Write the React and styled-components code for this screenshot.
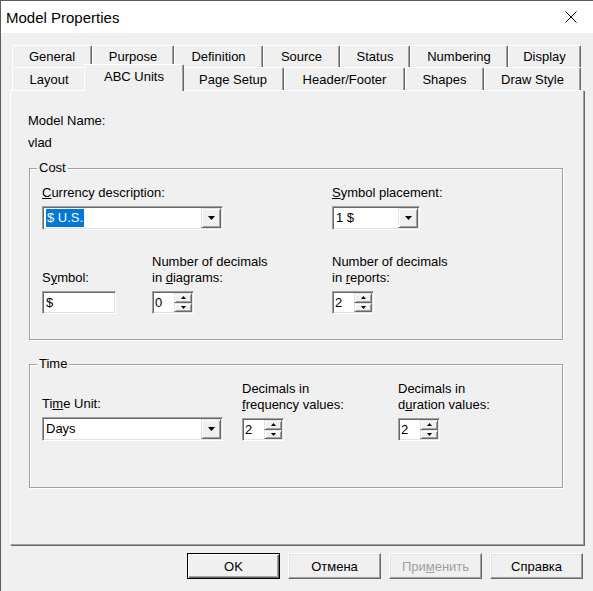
import React from "react";
import styled, { createGlobalStyle } from "styled-components";

const GlobalStyle = createGlobalStyle`
  html, body {
    margin: 0;
    padding: 0;
    background: #f0f0f0;
  }
  body {
    font-family: "Liberation Sans", Arial, sans-serif;
    font-size: 13px;
    color: #000;
  }
`;

const Window = styled.div`
  width: 593px;
  height: 591px;
  box-sizing: border-box;
  display: flex;
  flex-direction: column;
  background: #f0f0f0;
  border-top: 1px solid #5c5c5c;
  border-left: 1px solid #5c5c5c;
  overflow: hidden;
`;

const TitleBar = styled.div`
  flex: none;
  height: 32px;
  display: flex;
  align-items: center;
  justify-content: space-between;
  padding: 0 16px 0 5px;
  background: #fff;
  font-size: 15px;
`;

const Body = styled.div`
  flex: 1;
  display: flex;
  flex-direction: column;
  padding: 12px 9px 12px 9px;
`;

const TabRow = styled.div`
  display: flex;
  height: ${(p) => p.$h}px;
  padding-left: 2px;
`;

const Tab = styled.div`
  box-sizing: border-box;
  flex: none;
  width: ${(p) => p.$w + (p.$active ? 4 : 0)}px;
  height: ${(p) => (p.$active ? "27px" : "100%")};
  margin: ${(p) => (p.$active ? "-3px -2px 0" : "0")};
  padding-top: ${(p) => p.$pt}px;
  line-height: 16px;
  text-align: center;
  white-space: nowrap;
  background: #f0f0f0;
  border: 1px solid;
  border-bottom: none;
  border-color: #fff #696969 transparent #fff;
  border-radius: 2px 2px 0 0;
  box-shadow: inset -1px 0 0 #a0a0a0;
  position: relative;
  z-index: ${(p) => (p.$active ? 2 : 0)};
`;

const Panel = styled.div`
  flex: 1;
  box-sizing: border-box;
  border: 1px solid;
  border-color: #fff #a0a0a0 #a0a0a0 #fff;
  box-shadow: 1px 1px 0 #696969;
  padding: 22px 0 0 17px;
`;

const Line = styled.div`
  line-height: 16px;
  margin-top: ${(p) => p.$mt || 0}px;
`;

const Group = styled.fieldset`
  box-sizing: border-box;
  width: 534px;
  min-width: 0;
  margin: ${(p) => p.$mt}px 0 0 1px;
  padding: 9px 12px ${(p) => p.$pb}px 12px;
  border: 1px solid #a0a0a0;
  box-shadow: 1px 1px 0 #fff, inset 1px 1px 0 #fff;
`;

const Legend = styled.legend`
  margin-left: -5px;
  padding: 0 2px;
  line-height: 16px;
  background: #f0f0f0;
`;

const FieldGrid = styled.div`
  display: grid;
  grid-template-columns: ${(p) => p.$cols};
  align-items: end;
  row-gap: 24px;
`;

const Field = styled.div`
  display: flex;
  flex-direction: column;
  align-items: flex-start;
  gap: 5px;
  grid-column: ${(p) => p.$span || "auto"};
`;

const Label = styled.div`
  line-height: 16px;
  white-space: nowrap;
`;

const Sunken = styled.div`
  box-sizing: border-box;
  width: ${(p) => p.$w}px;
  height: ${(p) => p.$h}px;
  display: flex;
  align-items: stretch;
  padding: 1px;
  background: #fff;
  border: 1px solid;
  border-color: #a0a0a0 #fff #fff #a0a0a0;
  box-shadow: inset 1px 1px 0 #696969, inset -1px -1px 0 #e3e3e3;
`;

const FieldText = styled.div`
  flex: 1;
  display: flex;
  align-items: center;
  padding-left: ${(p) => p.$pl}px;
  line-height: 16px;
  white-space: nowrap;
`;

const Selected = styled.span`
  background: #0078d7;
  color: #fff;
  line-height: 18px;
  padding: 0 1px;
`;

const RaisedBtn = styled.div`
  box-sizing: border-box;
  flex: ${(p) => (p.$fill ? 1 : "none")};
  width: ${(p) => p.$w}px;
  display: flex;
  align-items: center;
  justify-content: center;
  background: #f0f0f0;
  border: 1px solid;
  border-color: #e3e3e3 #696969 #696969 #e3e3e3;
  box-shadow: inset 1px 1px 0 #fff, inset -1px -1px 0 #a0a0a0;
`;

const SpinColumn = styled.div`
  display: flex;
  flex-direction: column;
  width: 18px;
`;

const ButtonRow = styled.div`
  flex: none;
  display: flex;
  justify-content: flex-end;
  gap: 8px;
  margin: 8px 1px 0 0;
`;

const Button = styled.button`
  box-sizing: border-box;
  width: 93px;
  height: 26px;
  padding: 0;
  font: inherit;
  color: ${(p) => (p.disabled ? "#a0a0a0" : "#000")};
  background: #f0f0f0;
  border: 1px solid;
  border-color: ${(p) => (p.$default ? "#000" : "#fff #696969 #696969 #fff")};
  box-shadow: ${(p) =>
    p.$default
      ? "inset 1px 1px 0 #fff, inset -1px -1px 0 #696969, inset -2px -2px 0 #a0a0a0"
      : "inset -1px -1px 0 #a0a0a0, inset 1px 1px 0 #e3e3e3"};
`;

const backTabs = [
  ["General", 80],
  ["Purpose", 82],
  ["Definition", 89],
  ["Source", 77],
  ["Status", 70],
  ["Numbering", 98],
  ["Display", 73],
];

const frontTabs = [
  ["Layout", 74],
  ["ABC Units", 96],
  ["Page Setup", 102],
  ["Header/Footer", 121],
  ["Shapes", 79],
  ["Draw Style", 97],
];

function CloseIcon() {
  return (
    <svg width="12" height="12" viewBox="0 0 12 12">
      <path d="M0.5 0.5 L11.5 11.5 M11.5 0.5 L0.5 11.5" stroke="#000" strokeWidth="1" />
    </svg>
  );
}

function Arrow({ up, w, h }) {
  const pts = up ? `0,${h} ${w},${h} ${w / 2},0` : `0,0 ${w},0 ${w / 2},${h}`;
  return (
    <svg width={w} height={h} viewBox={`0 0 ${w} ${h}`}>
      <polygon points={pts} fill="#000" />
    </svg>
  );
}

function Combo({ width, children }) {
  return (
    <Sunken $w={width} $h={24}>
      <FieldText $pl={2}>{children}</FieldText>
      <RaisedBtn $w={20}>
        <Arrow w={7} h={4} />
      </RaisedBtn>
    </Sunken>
  );
}

function Spinner({ value }) {
  return (
    <Sunken $w={42} $h={23}>
      <FieldText $pl={1}>{value}</FieldText>
      <SpinColumn>
        <RaisedBtn $fill>
          <Arrow up w={5} h={3} />
        </RaisedBtn>
        <RaisedBtn $fill>
          <Arrow w={5} h={3} />
        </RaisedBtn>
      </SpinColumn>
    </Sunken>
  );
}

export default function App() {
  return (
    <>
      <GlobalStyle />
      <Window>
        <TitleBar>
          <span>Model Properties</span>
          <CloseIcon />
        </TitleBar>
        <Body>
          <TabRow $h={22}>
            {backTabs.map(([name, w]) => (
              <Tab key={name} $w={w} $pt={3}>
                {name}
              </Tab>
            ))}
          </TabRow>
          <TabRow $h={23}>
            {frontTabs.map(([name, w]) => (
              <Tab key={name} $w={w} $pt={4} $active={name === "ABC Units"}>
                {name}
              </Tab>
            ))}
          </TabRow>
          <Panel>
            <Line>Model Name:</Line>
            <Line $mt={6}>vlad</Line>

            <Group $mt={9} $pb={25}>
              <Legend>Cost</Legend>
              <FieldGrid $cols="110px 180px 1fr">
                <Field $span="1 / 3">
                  <Label>
                    <u>C</u>urrency description:
                  </Label>
                  <Combo width={181}>
                    <Selected>$ U.S.</Selected>
                  </Combo>
                </Field>
                <Field>
                  <Label>
                    <u>S</u>ymbol placement:
                  </Label>
                  <Combo width={88}>1 $</Combo>
                </Field>

                <Field>
                  <Label>
                    S<u>y</u>mbol:
                  </Label>
                  <Sunken $w={74} $h={23}>
                    <FieldText $pl={2}>$</FieldText>
                  </Sunken>
                </Field>
                <Field>
                  <Label>
                    Number of decimals
                    <br />
                    in <u>d</u>iagrams:
                  </Label>
                  <Spinner value="0" />
                </Field>
                <Field>
                  <Label>
                    Number of decimals
                    <br />
                    in <u>r</u>eports:
                  </Label>
                  <Spinner value="2" />
                </Field>
              </FieldGrid>
            </Group>

            <Group $mt={16} $pb={46}>
              <Legend>Time</Legend>
              <FieldGrid $cols="200px 156px 1fr">
                <Field>
                  <Label>
                    Ti<u>m</u>e Unit:
                  </Label>
                  <Combo width={181}>Days</Combo>
                </Field>
                <Field>
                  <Label>
                    Decimals in
                    <br />
                    <u>f</u>requency values:
                  </Label>
                  <Spinner value="2" />
                </Field>
                <Field>
                  <Label>
                    Decimals in
                    <br />
                    d<u>u</u>ration values:
                  </Label>
                  <Spinner value="2" />
                </Field>
              </FieldGrid>
            </Group>
          </Panel>
          <ButtonRow>
            <Button $default>OK</Button>
            <Button>Отмена</Button>
            <Button disabled>
              При<u>м</u>енить
            </Button>
            <Button>Справка</Button>
          </ButtonRow>
        </Body>
      </Window>
    </>
  );
}
